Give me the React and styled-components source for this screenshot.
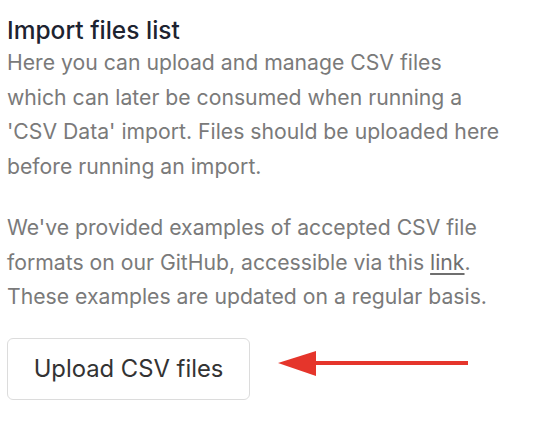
import React from 'react'
import styled, { createGlobalStyle } from 'styled-components'

const GlobalStyle = createGlobalStyle`
    body {
        margin: 0;
        background: #fff;
        font-family: Inter, "Noto Sans", sans-serif;
    }
`

const Panel = styled.div`
    padding: 15px 0 0 7px;
    width: 500px;
`
const Title = styled.h2`
    margin: 0;
    font-size: 24.5px;
    line-height: 30px;
    font-weight: 500;
    color: #1d2330;
`
const Text = styled.p`
    margin: ${(p) => (p.first ? '0' : '27px')} 0 0;
    font-size: 21.2px;
    line-height: 34.5px;
    color: #7a7a7a;
    a {
        color: #6f6f6f;
        text-decoration: underline;
        text-underline-offset: 3px;
    }
`
const Actions = styled.div`
    display: flex;
    align-items: flex-start;
    gap: 28px;
    margin-top: 24px;
`
const UploadButton = styled.button`
    width: 243px;
    height: 62px;
    border: 1px solid #dcdcdc;
    border-radius: 6px;
    background: #fff;
    font-family: Inter, "Noto Sans", sans-serif;
    font-size: 23.8px;
    color: #333;
    cursor: pointer;
`
const Arrow = styled.svg`
    margin-top: 13px;
    flex: none;
`

const App = () => {
    return (
        <Panel>
            <GlobalStyle />
            <Title>Import files list</Title>
            <Text first>
                Here you can upload and manage CSV files which can later be
                consumed when running a 'CSV Data' import. Files should be
                uploaded here before running an import.
            </Text>
            <Text>
                We've provided examples of accepted CSV file formats on our
                GitHub, accessible via this <a href="#link">link</a>. These
                examples are updated on a regular basis.
            </Text>
            <Actions>
                <UploadButton>Upload CSV files</UploadButton>
                <Arrow width="190" height="26" viewBox="0 0 190 26">
                    <polygon points="0,12 38,0 38,25" fill="#e5352b" />
                    <rect x="36" y="10" width="154" height="4" fill="#e5352b" />
                </Arrow>
            </Actions>
        </Panel>
    )
}

export default App
